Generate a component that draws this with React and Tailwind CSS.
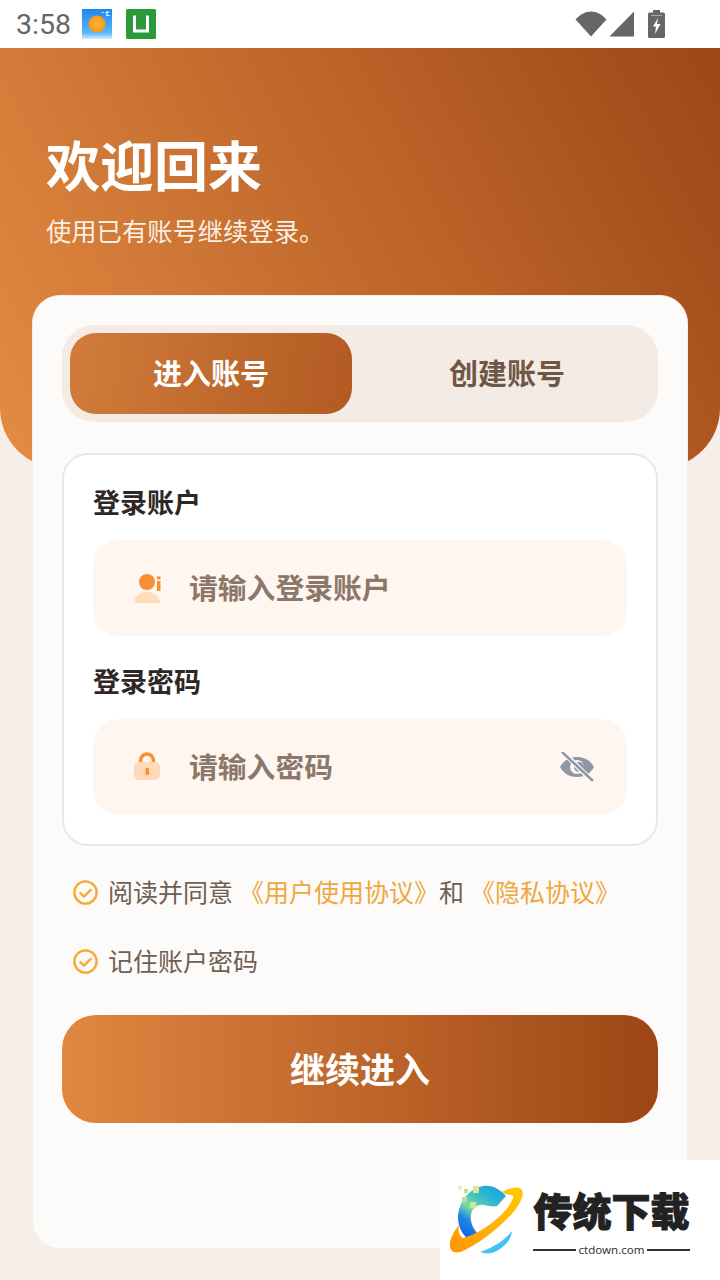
const font = { fontFamily: '"Noto Sans CJK SC", sans-serif' };

function Wifi() {
  return <svg width="32" height="26" viewBox="0 0 32 26"><path d="M0.500 8.500C5 3.500 10 0.500 16 0.500s11 3 15.500 8L16 25.500z" fill="#666" /></svg>;
}
function Signal() {
  return <svg width="26" height="26" viewBox="0 0 26 26"><path d="M25 0.500V25.500H0.500z" fill="#666" /></svg>;
}
function Battery() {
  return <svg width="17" height="28" viewBox="0 0 17 28"><path d="M5 0h7v2.500h3.500a1.500 1.500 0 0 1 1.500 1.500v22.500a1.500 1.500 0 0 1-1.500 1.500h-14a1.500 1.500 0 0 1-1.500-1.500V4a1.500 1.500 0 0 1 1.500-1.500H5z" fill="#666" /><path d="M10 8 5 16.500h3L7 24l5.500-10H9z" fill="#fff" /><rect x="3" y="5" width="11" height="1" fill="#aaa" /></svg>;
}
function WeatherIcon() {
  return (
    <svg width="30" height="30" viewBox="0 0 30 30">
      <defs>
        <linearGradient id="sky" x1="0" y1="0" x2="0" y2="1"><stop offset="0" stopColor="#1a86f0" /><stop offset="0.8" stopColor="#5cb8fa" /><stop offset="1" stopColor="#d5eefc" /></linearGradient>
        <radialGradient id="sun"><stop offset="0" stopColor="#ffb52e" /><stop offset="1" stopColor="#f59a1e" /></radialGradient>
      </defs>
      <rect width="30" height="30" fill="url(#sky)" />
      <circle cx="15" cy="15" r="8.500" fill="url(#sun)" />
      <path d="M20 3.500h1.500M24 3v1M27.500 3H25v3.500h2.500" stroke="#fff" strokeWidth="1.200" fill="none" />
    </svg>
  );
}
function GreenIcon() {
  return (
    <svg width="30" height="30" viewBox="0 0 30 30">
      <rect width="30" height="30" rx="1.500" fill="#2b9a3b" />
      <path d="M8.500 6.500v15.500h13V6.500" fill="none" stroke="#fff" strokeWidth="3" />
    </svg>
  );
}
function UserIcon() {
  return (
    <svg width="28" height="30" viewBox="0 0 28 30">
      <path d="M1 30a13 11 0 0 1 26 0z" fill="#ffdcbc" />
      <circle cx="14" cy="9" r="8" fill="#f88f36" />
      <rect x="24" y="3.500" width="3.500" height="3" fill="#f88f36" />
      <rect x="24" y="8" width="3.500" height="10" fill="#f88f36" />
    </svg>
  );
}
function LockIcon() {
  return (
    <svg width="28" height="30" viewBox="0 0 28 30">
      <path d="M7.500 13V8.500a6.500 6.500 0 0 1 13 0V13" fill="none" stroke="#f88f36" strokeWidth="3.500" />
      <rect x="1" y="10" width="26" height="18" rx="5" fill="#ffd9b8" />
      <rect x="12.500" y="16" width="3.500" height="7" rx="1" fill="#f88f36" />
    </svg>
  );
}
function EyeOff() {
  return (
    <svg width="36" height="30" viewBox="0 0 36 30">
      <path d="M1 15C5 8 11 5 18 5s13 3 17 10c-4 7-10 10-17 10S5 22 1 15z" fill="#8f97a6" />
      <circle cx="18" cy="15" r="7" fill="#fff6f0" />
      <circle cx="20" cy="15" r="5" fill="#8f97a6" />
      <path d="M4 0 33 29" stroke="#fff6f0" strokeWidth="5" />
      <path d="M3 0 34 29" stroke="#8f97a6" strokeWidth="2.500" />
    </svg>
  );
}
function Check() {
  return (
    <svg width="25" height="25" viewBox="0 0 24 24" className="shrink-0">
      <circle cx="12" cy="12" r="10.700" fill="none" stroke="#f9a834" strokeWidth="2.300" />
      <path d="M7 12.500l3.500 3.500 6.500-6.500" fill="none" stroke="#f9a834" strokeWidth="2.300" strokeLinecap="round" strokeLinejoin="round" />
    </svg>
  );
}
function Logo() {
  return (
    <svg width="90" height="90" viewBox="0 0 90 90" className="shrink-0">
      <defs>
        <linearGradient id="ring" x1="0" y1="1" x2="1" y2="0"><stop offset="0" stopColor="#ff9608" /><stop offset="1" stopColor="#ffcb00" /></linearGradient>
        <linearGradient id="arc" x1="0.800" y1="0" x2="0.200" y2="1"><stop offset="0" stopColor="#1aa5dc" /><stop offset="0.25" stopColor="#2fb6cf" /><stop offset="0.55" stopColor="#7edd9e" /><stop offset="0.75" stopColor="#1e88e5" /><stop offset="1" stopColor="#1462ea" /></linearGradient>
      </defs>
      <path d="M61 21C54 13 46 10 38 11 24 14 14 26 13 42c0 8 3 16 9 21l12-3c-6-6-9-13-8-20 1-7 7-11 13-10 5 1 9 2 13 1z" fill="url(#arc)" />
      <path d="M57 17C66 12 75 11 77 15c3 5-3 17-14 28C50 56 33 69 18 76c-8 3-12 1-13-4-1-6 3-15 9-22-1 6 0 11 4 13 12-3 27-12 38-23 8-8 13-16 12-19-1-2-5 0-11-4z" fill="url(#ring)" />
      <path d="M35 77C49 72 60 65 67 56 66 66 58 74 47 78 43 79 38 78 35 77z" fill="#3ec5f5" />
      <rect x="13" y="11" width="3.500" height="3.500" fill="#e6eda6" />
      <rect x="19" y="14" width="4" height="4" fill="#b9e48e" />
      <rect x="28" y="11" width="6" height="7" fill="#dfe98f" />
      <rect x="17" y="22" width="5" height="5" fill="#b5e49a" />
      <rect x="25" y="27" width="6" height="6" fill="#c9e89a" />
    </svg>
  );
}

export default function App() {
  return (
    <div className="relative w-[720px] h-[1280px] overflow-hidden bg-[#f6eee8]" style={font}>
      <div className="h-12 bg-white flex items-center pl-4 pr-[55px]">
        <span className="text-[28.500px] leading-none text-[#666] mr-[11px] mt-[3px]" style={{ fontFamily: 'Roboto, sans-serif' }}>3:58</span>
        <div className="mr-[14px]"><WeatherIcon /></div>
        <GreenIcon />
        <div className="ml-auto flex items-center gap-[2px]">
          <Wifi /><Signal /><div className="ml-[11px]"><Battery /></div>
        </div>
      </div>

      <div className="h-[420px] rounded-b-[60px] bg-[linear-gradient(62deg,#e48c43,#9e4616)] pl-[46px] pt-[80px] text-white">
        <h1 className="text-[54px] leading-[72px] font-bold">欢迎回来</h1>
        <p className="text-[25.300px] leading-[38px] mt-[11px] text-[#fbeee3]">使用已有账号继续登录。</p>
      </div>

      <div className="-mt-[173px] mx-8 h-[954px] rounded-[28px] bg-[#fcfbf9] border border-[#f3ede7] relative px-[29px] pt-[29px]">
        <div className="h-[97px] rounded-[32px] bg-[#f4ebe5] p-2 flex items-stretch">
          <div className="w-[282px] rounded-[26px] bg-[linear-gradient(100deg,#d17c3c,#b25a22)] flex items-center justify-center text-white text-[29px] font-bold pb-[1px]">进入账号</div>
          <div className="flex-1 ml-3 flex items-center justify-center text-[#6f5747] text-[29px] font-bold pb-[1px]">创建账号</div>
        </div>

        <div className="mt-[31px] h-[393px] rounded-[26px] bg-white border-2 border-[#ebe9e6] px-[29px] pt-[28px]">
          <div className="text-[27px] leading-[38px] font-bold text-[#2e2723]">登录账户</div>
          <div className="mt-[19px] h-24 rounded-[26px] bg-[#fff6f0] flex items-center pl-10">
            <UserIcon />
            <span className="ml-[28px] mb-[3px] text-[28.800px] font-bold text-[#8c786b]">请输入登录账户</span>
          </div>
          <div className="mt-[26px] text-[27px] leading-[38px] font-bold text-[#2e2723]">登录密码</div>
          <div className="mt-[19px] h-24 rounded-[26px] bg-[#fff6f0] flex items-center pl-10 pr-[32px]">
            <LockIcon />
            <span className="ml-[28px] mb-[3px] text-[28.800px] font-bold text-[#8c786b]">请输入密码</span>
            <div className="ml-auto"><EyeOff /></div>
          </div>
        </div>

        <div className="mt-[29px] flex items-center pl-[11px] h-[34px] text-[25px] text-[#6f5f53]">
          <Check />
          <span className="ml-[10px] whitespace-nowrap">阅读并同意</span>
          <span className="ml-[6px] whitespace-nowrap text-[#efa83f]">《用户使用协议》</span>
          <span className="whitespace-nowrap">和</span>
          <span className="ml-[6px] whitespace-nowrap text-[#efa83f]">《隐私协议》</span>
        </div>
        <div className="mt-[35px] flex items-center pl-[11px] h-[34px] text-[25px] text-[#6f5f53]">
          <Check />
          <span className="ml-[10px]">记住账户密码</span>
        </div>

        <div className="mt-[37px] h-[108px] rounded-[34px] bg-gradient-to-r from-[#e08741] to-[#9e4614] flex items-center justify-center text-white text-[35px] font-bold pb-[2px]">继续进入</div>
      </div>

      <div className="absolute right-0 bottom-0 w-[280px] h-[120px] bg-white flex items-center pl-[5px]">
        <Logo />
        <div className="-ml-[2px] flex flex-col items-center w-[157px] mt-[3px]">
          <div className="text-[39px] leading-[46px] font-black text-[#222] whitespace-nowrap [-webkit-text-stroke:1px_#222]">传统下载</div>
          <div className="flex items-center w-full gap-[3px] text-[11.500px] leading-[14px] text-[#333] mt-[11px]" style={{ fontFamily: '"Noto Sans", sans-serif' }}>
            <div className="flex-1 h-[2px] bg-[#333]" />
            <span>ctdown.com</span>
            <div className="flex-1 h-[2px] bg-[#333]" />
          </div>
        </div>
      </div>
    </div>
  );
}
